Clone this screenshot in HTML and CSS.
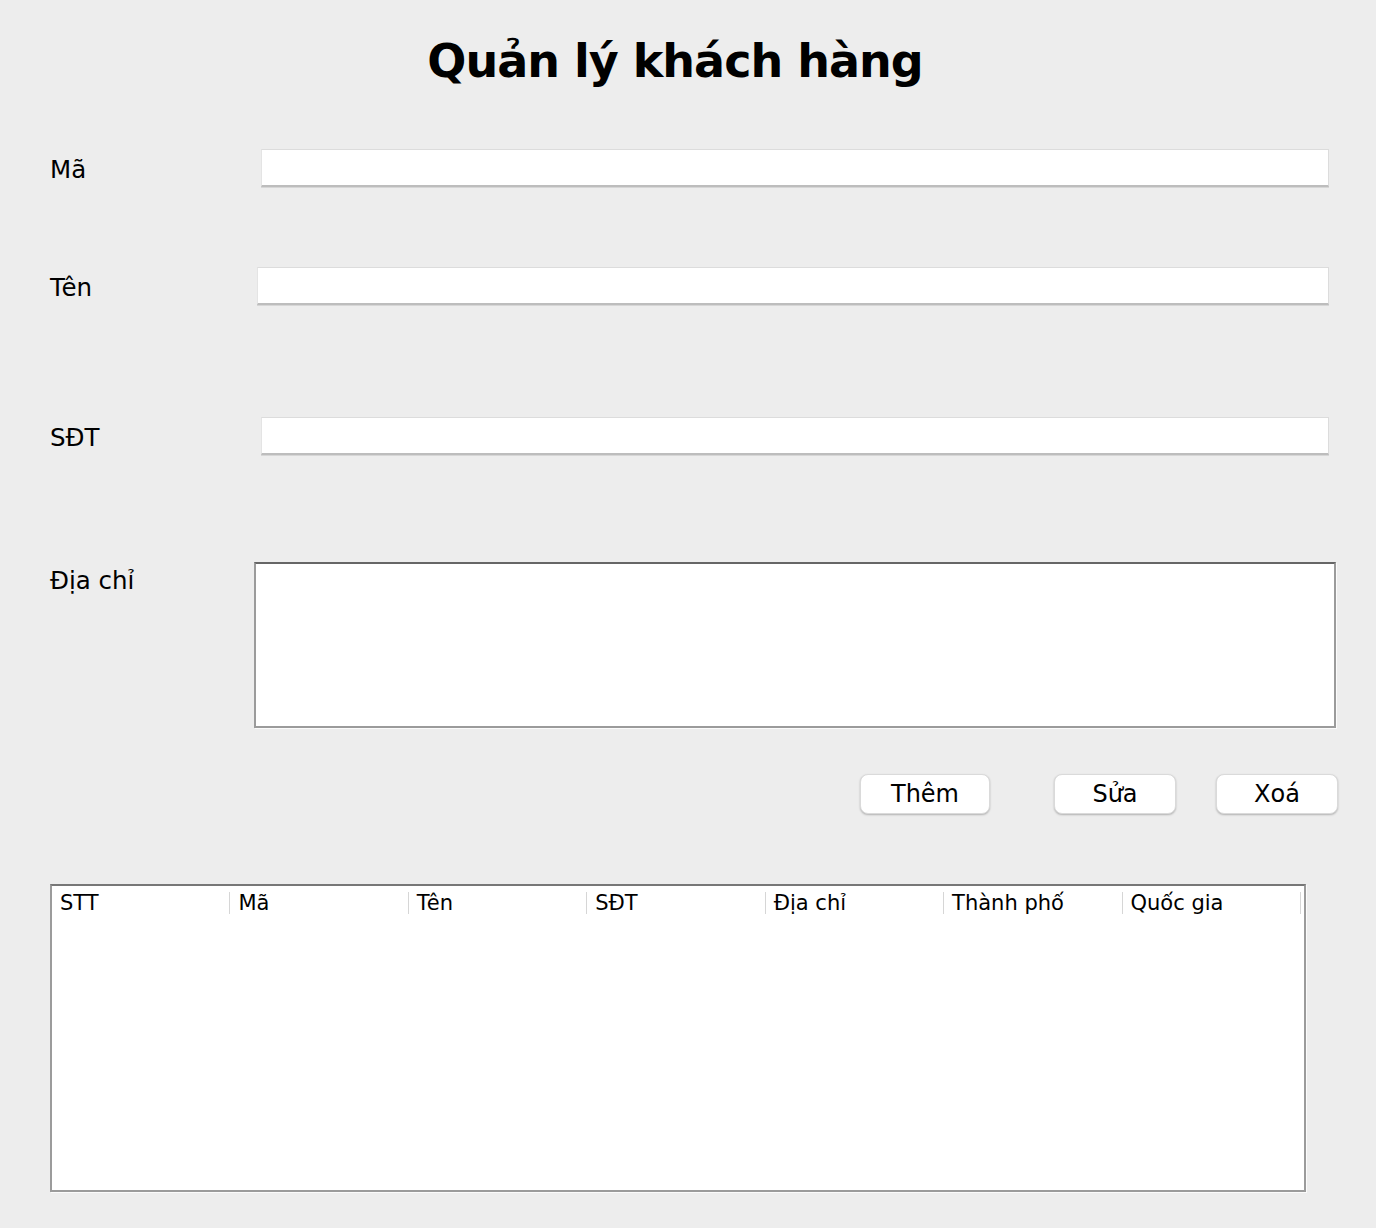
FILE: index.html
```html
<!DOCTYPE html>
<html lang="vi">
<head>
<meta charset="utf-8">
<title>Quản lý khách hàng</title>
<link rel="stylesheet" href="styles.css">
</head>
<body>
<div class="window">
  <h1 class="title">Quản lý khách hàng</h1>
  <div class="form">
    <div class="row row-ma">
      <label class="label">Mã</label>
      <input class="field field-ma" type="text">
    </div>
    <div class="row row-ten">
      <label class="label">Tên</label>
      <input class="field field-ten" type="text">
    </div>
    <div class="row row-sdt">
      <label class="label">SĐT</label>
      <input class="field field-sdt" type="text">
    </div>
    <div class="row row-diachi">
      <label class="label label-top">Địa chỉ</label>
      <textarea class="area"></textarea>
    </div>
  </div>
  <div class="actions">
    <button class="btn btn-them">Thêm</button>
    <button class="btn btn-sua">Sửa</button>
    <button class="btn btn-xoa">Xoá</button>
  </div>
  <div class="table">
    <div class="thead">
      <div class="th">STT</div>
      <div class="th">Mã</div>
      <div class="th">Tên</div>
      <div class="th">SĐT</div>
      <div class="th">Địa chỉ</div>
      <div class="th">Thành phố</div>
      <div class="th">Quốc gia</div>
    </div>
  </div>
</div>
</body>
</html>
```

FILE: styles.css
```css
html, body {
  margin: 0;
  padding: 0;
  background: #ededed;
}
body {
  font-family: "DejaVu Sans", "Liberation Sans", sans-serif;
  color: #000;
  width: 1376px;
  height: 1228px;
  overflow: hidden;
}
.window {
  display: flex;
  flex-direction: column;
}
.title {
  margin: 35px 0 0 0;
  width: 1350px;
  text-align: center;
  font-size: 46px;
  letter-spacing: -1px;
  line-height: 52px;
  font-weight: bold;
}
.form {
  display: flex;
  flex-direction: column;
  padding-left: 50px;
}
.row {
  display: flex;
  align-items: center;
}
.row-ma { margin-top: 62px; }
.row-ten { margin-top: 80px; }
.row-sdt { margin-top: 112px; }
.row-diachi { margin-top: 107px; align-items: flex-start; }
.label {
  font-size: 24.5px;
  line-height: 38px;
  padding-top: 2px;
  box-sizing: border-box;
  height: 38px;
  width: 211px;
  flex: none;
}
.label-top {
  padding-top: 0;
}
.field {
  box-sizing: border-box;
  height: 38px;
  background: #fff;
  border: none;
  border-top: 1px solid #dcdcdc;
  border-left: 1px solid #e4e4e4;
  border-right: 1px solid #dcdcdc;
  border-bottom: 2px solid #bdbdbd;
  box-shadow: 0 1px 0 #d6d6d6;
  margin: 0;
  padding: 0 6px;
  font: inherit;
  outline: none;
}
.field-ma { width: 1068px; }
.field-ten { width: 1072px; margin-left: -4px; }
.field-sdt { width: 1068px; }
.area {
  box-sizing: border-box;
  width: 1082px;
  height: 166px;
  margin: 0 0 0 -7px;
  background: #fff;
  border: 2px solid #9b9b9b;
  border-top-color: #666;
  box-shadow: 1px 1px 0 #fbfbfb;
  resize: none;
  outline: none;
  font: inherit;
}
.actions {
  display: flex;
  justify-content: flex-end;
  padding-right: 38px;
  margin-top: 46px;
}
.btn {
  box-sizing: border-box;
  height: 40px;
  width: 122px;
  background: #fff;
  border: 1px solid #dadada;
  border-radius: 8px;
  box-shadow: 0 1px 2px rgba(0, 0, 0, 0.25);
  font-family: "DejaVu Sans", "Liberation Sans", sans-serif;
  font-size: 24px;
  line-height: 38px;
  color: #000;
  padding: 0;
  margin: 0;
}
.btn-them { width: 130px; margin-right: 64px; }
.btn-sua { margin-right: 40px; }
.table {
  box-sizing: border-box;
  margin: 70px 0 0 50px;
  width: 1256px;
  height: 308px;
  background: #fff;
  border: 2px solid #9b9b9b;
  border-top-color: #777;
  box-shadow: 1px 1px 0 #fbfbfb;
}
.thead {
  display: grid;
  grid-template-columns: repeat(7, 178.43px);
  padding-top: 6px;
}
.th {
  box-sizing: border-box;
  height: 22px;
  line-height: 22px;
  font-size: 21px;
  padding-left: 8px;
  border-right: 1px solid #d6d6d6;
  white-space: nowrap;
}
```
